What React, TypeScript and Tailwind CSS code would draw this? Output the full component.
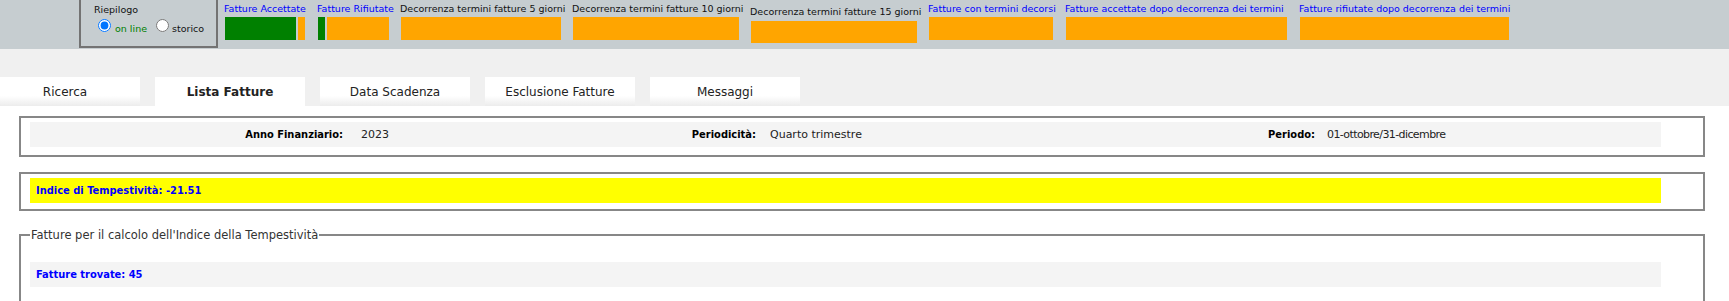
import React from 'react';

type Segment = { color: string; width: number };

type Indicatore = {
  key: string;
  label: string;
  blue: boolean;
  width: number;
  lowered: boolean;
  segments: Segment[];
};

const GREEN = '#008000';
const ORANGE = '#ffa500';

const indicatori: Indicatore[] = [
  {
    key: 'acc',
    label: 'Fatture Accettate',
    blue: true,
    width: 83,
    lowered: false,
    segments: [
      { color: GREEN, width: 71 },
      { color: ORANGE, width: 7 },
    ],
  },
  {
    key: 'rif',
    label: 'Fatture Rifiutate',
    blue: true,
    width: 73,
    lowered: false,
    segments: [
      { color: GREEN, width: 7 },
      { color: ORANGE, width: 62 },
    ],
  },
  {
    key: 'd5',
    label: 'Decorrenza termini fatture 5 giorni',
    blue: false,
    width: 162,
    lowered: false,
    segments: [{ color: ORANGE, width: 160 }],
  },
  {
    key: 'd10',
    label: 'Decorrenza termini fatture 10 giorni',
    blue: false,
    width: 168,
    lowered: false,
    segments: [{ color: ORANGE, width: 166 }],
  },
  {
    key: 'd15',
    label: 'Decorrenza termini fatture 15 giorni',
    blue: false,
    width: 168,
    lowered: true,
    segments: [{ color: ORANGE, width: 166 }],
  },
  {
    key: 'dec',
    label: 'Fatture con termini decorsi',
    blue: true,
    width: 127,
    lowered: false,
    segments: [{ color: ORANGE, width: 124 }],
  },
  {
    key: 'accdopo',
    label: 'Fatture accettate dopo decorrenza dei termini',
    blue: true,
    width: 224,
    lowered: false,
    segments: [{ color: ORANGE, width: 221 }],
  },
  {
    key: 'rifdopo',
    label: 'Fatture rifiutate dopo decorrenza dei termini',
    blue: true,
    width: 211,
    lowered: false,
    segments: [{ color: ORANGE, width: 209 }],
  },
];

const tabs = ['Ricerca', 'Lista Fatture', 'Data Scadenza', 'Esclusione Fatture', 'Messaggi'];

const boldFont = "font-bold font-['DejaVu_Sans_Condensed','DejaVu_Sans',sans-serif]";

function Riepilogo() {
  return (
    <div className="ml-[79px] h-[48px] w-[139px] border-x-2 border-b-2 border-[#737373] pl-[13px] pt-[4px]">
      <div className="text-[9.5px] leading-[12px] text-[#111]">Riepilogo</div>
      <div className="mt-[3px] flex items-start pl-[4px] text-[9.5px] leading-[12px]">
        <input type="radio" name="riepilogo" defaultChecked className="h-[13px] w-[13px]" />
        <span className="ml-[4px] mt-[4px] text-[#008000]">on line</span>
        <input type="radio" name="riepilogo" className="ml-[9px] h-[13px] w-[13px]" />
        <span className="ml-[3px] mt-[4px] text-[#111]">storico</span>
      </div>
    </div>
  );
}

function Indicatori() {
  return (
    <div className="ml-[6px] flex gap-[10px]">
      {indicatori.map((ind) => (
        <div
          key={ind.key}
          className={ind.lowered ? 'pt-[6px]' : 'pt-[3px]'}
          style={{ width: ind.width }}
        >
          <div
            className={`whitespace-nowrap text-[9.5px] leading-[12px] ${
              ind.blue ? 'text-[#0000ff]' : 'text-[#111]'
            }`}
          >
            {ind.label}
          </div>
          <div
            className={`ml-[1px] flex gap-[2px] ${
              ind.lowered ? 'mt-[3px] h-[22px]' : 'mt-[2px] h-[23px]'
            }`}
          >
            {ind.segments.map((s, i) => (
              <div key={i} className="h-full" style={{ width: s.width, backgroundColor: s.color }} />
            ))}
          </div>
        </div>
      ))}
    </div>
  );
}

function Tabs() {
  return (
    <div className="flex h-[57px] items-end bg-[#f0f0f0]">
      <div className="-ml-[10px] flex gap-[15px]">
        {tabs.map((t, i) => (
          <div
            key={t}
            className={`flex h-[29px] w-[150px] items-center justify-center text-[12px] text-[#222] ${
              i === 1
                ? 'bg-white font-bold'
                : 'bg-[linear-gradient(to_bottom,#ffffff_65%,#ececec)]'
            }`}
          >
            {t}
          </div>
        ))}
      </div>
    </div>
  );
}

function Box(props: { children: React.ReactNode; className?: string }) {
  return (
    <div
      className={`ml-[19px] w-[1686px] border-2 border-[#878787] pl-[9px] pt-[4px] ${
        props.className ?? ''
      }`}
    >
      {props.children}
    </div>
  );
}

function Row(props: { children: React.ReactNode; className: string }) {
  return (
    <div className={`flex h-[25px] w-[1631px] items-center text-[11px] leading-[14px] ${props.className}`}>
      {props.children}
    </div>
  );
}

export default function App() {
  return (
    <div className="min-h-screen w-[1729px] bg-white font-['DejaVu_Sans',sans-serif]">
      <div className="flex h-[49px] bg-[#c6cdd0]">
        <Riepilogo />
        <Indicatori />
      </div>
      <Tabs />
      <div className="pt-[10px]">
        <Box className="h-[41px]">
          <Row className="bg-[#f4f4f4] text-[#222]">
            <div className={`w-[315px] pr-[2px] text-right text-black ${boldFont}`}>
              Anno Finanziario:
            </div>
            <div className="w-[275px] pl-[16px]">2023</div>
            <div className={`w-[138px] pr-[2px] text-right text-black ${boldFont}`}>
              Periodicità:
            </div>
            <div className="w-[392px] pl-[12px]">Quarto trimestre</div>
            <div className={`w-[167px] pr-[2px] text-right text-black ${boldFont}`}>
              Periodo:
            </div>
            <div className="pl-[10px] tracking-[-0.6px]">01-ottobre/31-dicembre</div>
          </Row>
        </Box>
        <Box className="mt-[15px] h-[39px]">
          <Row className={`bg-[#ffff00] pl-[6px] text-[#0000ff] ${boldFont}`}>
            Indice di Tempestività: -21.51
          </Row>
        </Box>
        <fieldset className="ml-[19px] mt-[17px] w-[1686px] border-2 border-[#878787] px-[9px] pb-[40px] pt-[20px]">
          <legend className="px-[1px] text-[11.5px] leading-[14px] text-[#333]">
            Fatture per il calcolo dell'Indice della Tempestività
          </legend>
          <Row className={`bg-[#f4f4f4] pl-[6px] text-[#0000ff] ${boldFont}`}>
            Fatture trovate: 45
          </Row>
        </fieldset>
      </div>
    </div>
  );
}
